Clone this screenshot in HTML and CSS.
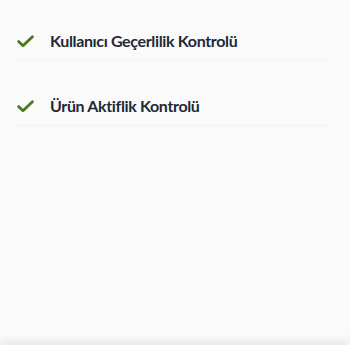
FILE: index.html
```html
<!DOCTYPE html>
<html lang="tr">
<head>
<meta charset="utf-8">
<link rel="stylesheet" href="styles.css">
</head>
<body>
<div class="page">
  <ul class="list">
    <li class="item">
      <svg class="check" width="17" height="13" viewBox="0 0 17 13"><path d="M1.6 6.6 L6 10.8 L15.4 1.7" fill="none" stroke="#4b7a1e" stroke-width="2.8" stroke-linecap="round" stroke-linejoin="round"/></svg>
      <span class="label">Kullanıcı Geçerlilik Kontrolü</span>
    </li>
    <li class="item">
      <svg class="check" width="17" height="13" viewBox="0 0 17 13"><path d="M1.6 6.6 L6 10.8 L15.4 1.7" fill="none" stroke="#4b7a1e" stroke-width="2.8" stroke-linecap="round" stroke-linejoin="round"/></svg>
      <span class="label">Ürün Aktiflik Kontrolü</span>
    </li>
  </ul>
  <div class="spacer"></div>
  <div class="footer"></div>
</div>
</body>
</html>
```
FILE: styles.css
```css
html, body {
  margin: 0;
  padding: 0;
  height: 100%;
  background: #fafafa;
}
.page {
  height: 350px;
  display: flex;
  flex-direction: column;
  overflow: hidden;
}
.list {
  list-style: none;
  margin: 0;
  padding: 20px 22px 0 16px;
  display: flex;
  flex-direction: column;
  gap: 24px;
}
.item {
  display: flex;
  align-items: center;
  padding: 11px 0 9px;
  border-bottom: 1px solid #f3f3f3;
  height: 20px;
}
.check {
  margin-left: 1px;
  margin-right: 16px;
  flex: none;
}
.label {
  font-family: "Lato", "DejaVu Sans", sans-serif;
  font-weight: 700;
  font-size: 16px;
  letter-spacing: -0.35px;
  line-height: 20px;
  color: #1f2a38;
}
.spacer {
  flex: 1;
}
.footer {
  height: 5px;
  background: #ffffff;
  box-shadow: 0 -3px 8px rgba(0, 0, 0, 0.12);
}
```
